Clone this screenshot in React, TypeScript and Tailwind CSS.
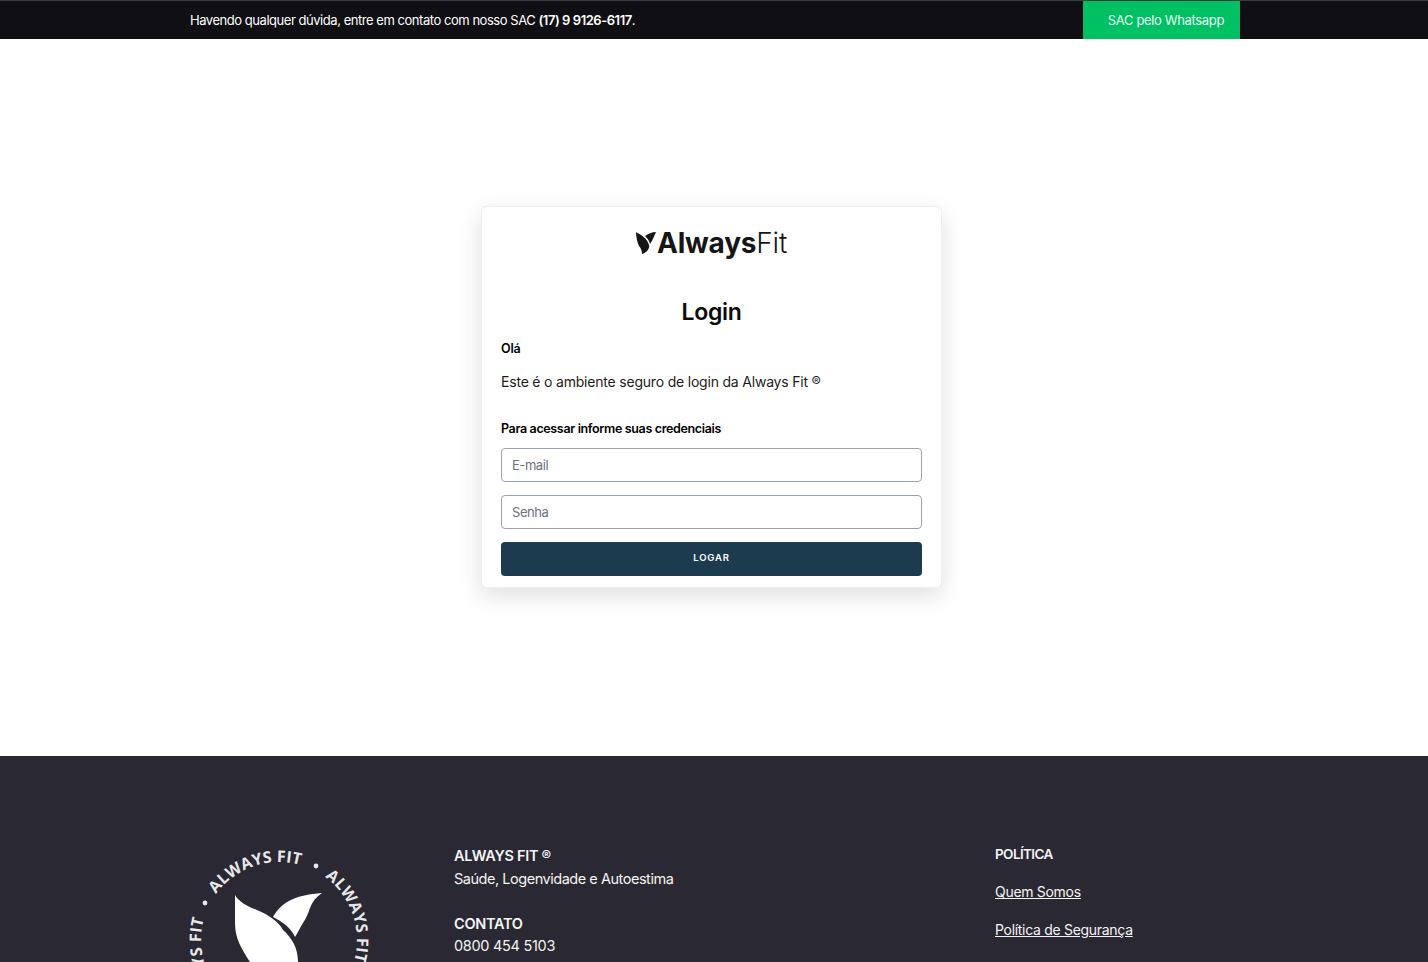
import React from 'react'

const font = { fontFamily: 'Inter, "Liberation Sans", sans-serif' }

const Bird = ({ className }: { className?: string }) => (
    <svg viewBox="0 0 20 24" className={className}>
        <path d="M0 1 C5 4 11 7 13 14 C14 18 10 22 6 23 C6 20 5 17 3 15 C1 11 0 5 0 1 Z" fill="currentColor" />
        <path d="M9 5 C12 3 16 1 20 1 C18 5 17 9 14 13 C13 9 11 7 9 5 Z" fill="currentColor" />
    </svg>
)

const Seal = () => (
    <svg viewBox="0 0 200 200" className="w-[200px] h-[200px] shrink-0 text-white">
        <defs>
            <path id="sealArc" d="M22 100 a78 78 0 0 1 156 0" />
        </defs>
        {[0, 90, 270].map((angle) => (
            <g key={angle} transform={`rotate(${angle} 100 100)`}>
                <text fill="#e8e8ea" fontSize="16" fontWeight="700" style={{ fontFamily: '"Open Sans", sans-serif' }}>
                    <textPath href="#sealArc" startOffset="49" textLength="95">ALWAYS FIT</textPath>
                </text>
                <circle cx="137" cy="26" r="2.4" fill="#e8e8ea" />
            </g>
        ))}
        <path d="M56 55 C60 62 68 66 78 70 C90 75 100 82 104 90 C113 98 119 108 119 122 L119 200 L71 122 C62 108 56 98 56 83 Z" fill="currentColor" />
        <path d="M94 77 C98 70 102 66 108 62 C118 56 130 54 143 53 C137 57 133 62 131 68 C129 74 127 78 124 83 C121 88 119 92 116 97 C112 88 104 82 94 77 Z" fill="currentColor" />
    </svg>
)

export default function App() {
    return (
        <div className="w-full h-[962px] overflow-hidden bg-white flex flex-col" style={font}>
            {/* Top bar */}
            <div className="h-[39px] shrink-0 bg-[#0f0f14] border-t border-[#3a3a3a] text-white">
                <div className="w-[1080px] mx-auto pl-4 pr-[14px] h-full flex justify-between items-center">
                    <p className="text-[13px] tracking-[-0.46px] pt-px">
                        Havendo qualquer dúvida, entre em contato com nosso SAC <strong className="font-semibold">(17) 9 9126-6117</strong>.
                    </p>
                    <a className="h-full w-[157px] bg-[#00c064] flex items-center justify-end pr-4 pt-px text-[13px] tracking-[-0.35px] text-[#eafff3]">
                        SAC pelo Whatsapp
                    </a>
                </div>
            </div>

            {/* Login */}
            <main className="h-[717px] shrink-0 flex items-center justify-center pr-[5px]">
                <div className="w-[461px] h-[382px] -mt-px bg-white rounded-md border border-[#eeeeee] shadow-[0_8px_24px_rgba(0,0,0,0.13)] px-[19px] pt-[18px]">
                    <div className="flex items-center justify-center gap-[1px] h-[36px] text-[#161616]">
                        <Bird className="w-[20px] h-[24px]" />
                        <span className="text-[28px] leading-none tracking-[-0.2px] font-bold">
                            Always<span className="font-light">Fit</span>
                        </span>
                    </div>
                    <h1 className="mt-[33px] text-center text-[23px] leading-[36px] font-semibold text-[#0b0b0b] tracking-[-0.3px]">Login</h1>
                    <p className="mt-[10px] text-[12.5px] leading-[18px] font-semibold text-black tracking-[-0.2px]">Olá</p>
                    <p className="mt-[14px] text-[14px] leading-[20px] text-[#1c1c1c] tracking-[-0.2px]">Este é o ambiente seguro de login da Always Fit ®</p>
                    <p className="mt-[28px] text-[12.5px] leading-[18px] font-semibold text-black tracking-[-0.35px]">Para acessar informe suas credenciais</p>
                    <form className="mt-[10px] flex flex-col gap-[13px]">
                        <input placeholder="E-mail" className="h-[34px] w-full rounded border border-[#9ca3af] px-[10px] text-[13px] tracking-[-0.45px] placeholder:text-[#6b7280] outline-none" />
                        <input placeholder="Senha" className="h-[34px] w-full rounded border border-[#9ca3af] px-[10px] text-[13px] tracking-[-0.45px] placeholder:text-[#6b7280] outline-none" />
                        <button type="button" className="h-[34px] w-full rounded bg-[#1c3b4f] text-white text-[9.5px] font-semibold tracking-[0.8px] pb-[1px]">
                            LOGAR
                        </button>
                    </form>
                </div>
            </main>

            {/* Footer */}
            <footer className="flex-1 bg-[#2a2833] text-[#f4f4f4]">
                <div className="w-[1080px] mx-auto flex pt-[88px]">
                    <div className="w-[280px] -mt-[4px] pl-[5px]">
                        <Seal />
                    </div>
                    <div className="w-[541px] text-[14.5px] leading-[23px] tracking-[-0.3px]">
                        <p className="font-semibold">ALWAYS FIT ®</p>
                        <p className="tracking-[-0.47px]">Saúde, Logenvidade e Autoestima</p>
                        <p className="font-semibold mt-[22px]">CONTATO</p>
                        <p className="-mt-px">0800 454 5103</p>
                    </div>
                    <div className="text-[14px] tracking-[-0.3px]">
                        <p className="font-semibold leading-[20px] text-[13.5px] tracking-[-0.6px]">POLÍTICA</p>
                        <a className="block underline mt-[18px] leading-[20px]">Quem Somos</a>
                        <a className="block underline mt-[18px] leading-[20px]">Política de Segurança</a>
                    </div>
                </div>
            </footer>
        </div>
    )
}
